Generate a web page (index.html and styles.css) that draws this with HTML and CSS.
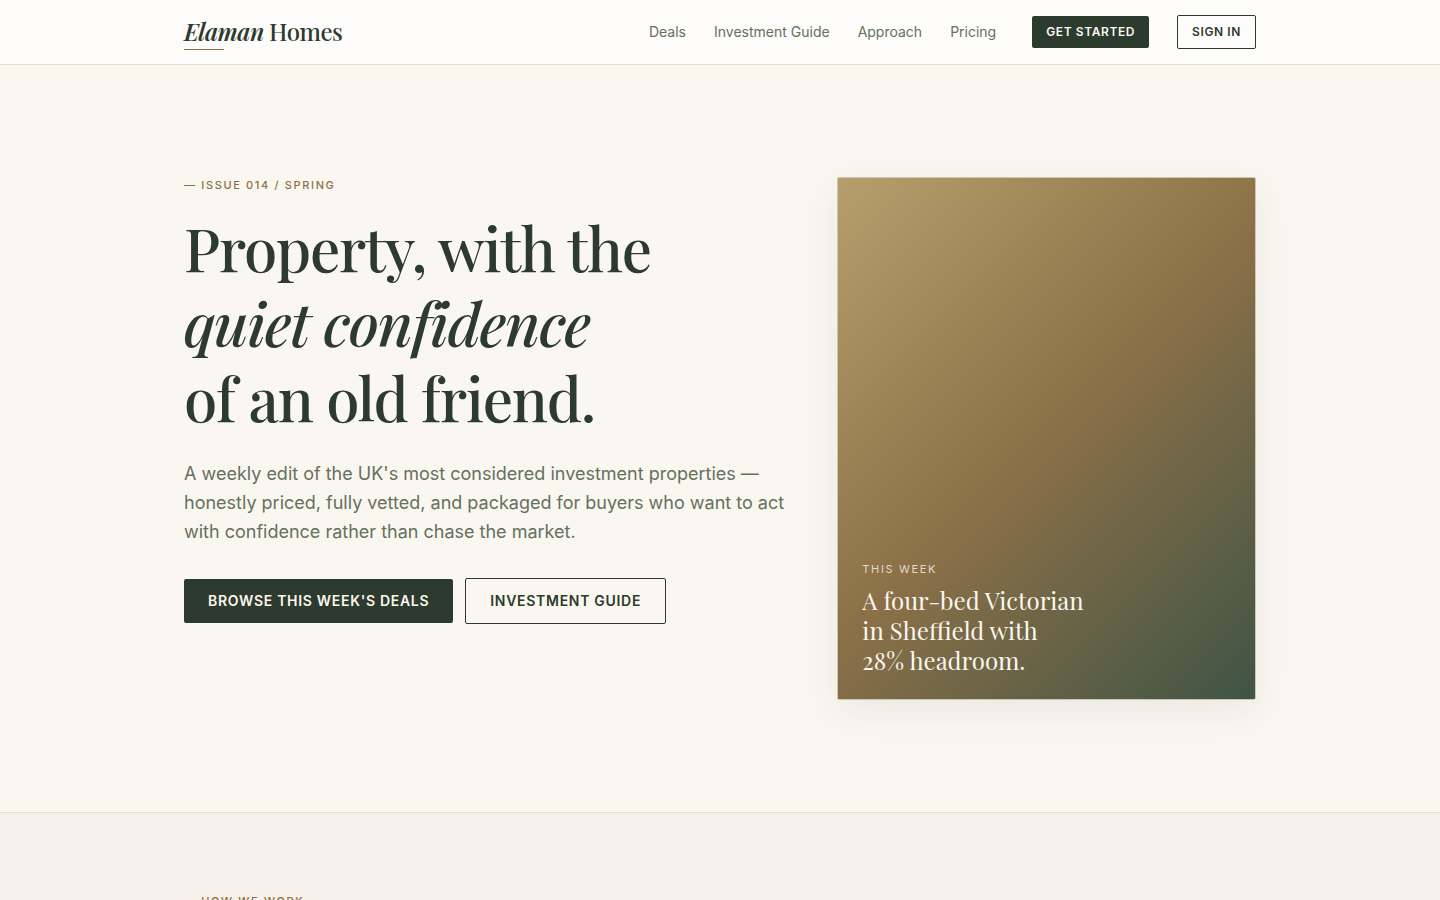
FILE: index.html
```html
<!DOCTYPE html>
<html lang="en-GB">
<head>
<meta charset="utf-8">
<meta name="viewport" content="width=device-width, initial-scale=1">
<title>Elaman Homes</title>
<link rel="stylesheet" href="styles.css">
</head>
<body>
<header class="site-header">
  <div class="container header-row">
    <a class="brand" href="#"><em>Elaman</em> Homes</a>
    <nav class="nav" aria-label="Main">
      <a class="nav-link" href="#deals">Deals</a>
      <a class="nav-link" href="#guide">Investment Guide</a>
      <a class="nav-link" href="#approach">Approach</a>
      <a class="nav-link" href="#pricing">Pricing</a>
      <a class="btn btn-small btn-solid nav-cta" href="#start">Get started</a>
      <a class="btn btn-small btn-outline" href="#signin">Sign in</a>
    </nav>
  </div>
</header>
<main>
  <section class="hero">
    <div class="container hero-grid">
      <div>
        <p class="eyebrow">— Issue 014 / Spring</p>
        <h1 class="headline">Property, with the<br><em>quiet confidence</em><br>of an old friend.</h1>
        <p class="lede">A weekly edit of the UK's most considered investment properties — honestly priced, fully vetted, and packaged for buyers who want to act with confidence rather than chase the market.</p>
        <div class="actions">
          <a class="btn btn-large btn-solid" href="#deals">Browse this week's deals</a>
          <a class="btn btn-large btn-outline" href="#guide">Investment guide</a>
        </div>
      </div>
      <article class="feature">
        <p class="feature-label">This week</p>
        <h2 class="feature-title">A four-bed Victorian<br>in Sheffield with<br>28% headroom.</h2>
      </article>
    </div>
  </section>
  <section class="approach" id="approach">
    <div class="container">
      <p class="eyebrow">— How we work</p>
    </div>
  </section>
</main>
</body>
</html>
```
FILE: styles.css
```css
:root {
  --ink: #2d3a2e;
  --muted: #66705f;
  --bronze: #8b7047;
  --cream: #faf7f0;
  --line: #e2ded6;
  --serif: "Playfair Display", "Liberation Serif", serif;
  --sans: Inter, "Liberation Sans", sans-serif;
}
* { box-sizing: border-box; }
html { overflow-x: hidden; scrollbar-width: none; }
body {
  margin: 0;
  background: var(--cream);
  color: var(--ink);
  font-family: var(--sans);
  font-size: 16px;
  line-height: 24px;
  -webkit-font-smoothing: antialiased;
}
p, h1, h2 { margin: 0; }
a { color: inherit; text-decoration: none; }
.container { max-width: 1120px; margin: 0 auto; padding: 0 24px; }

.site-header { background: #fdfcfa; border-bottom: 1px solid var(--line); }
.header-row { display: flex; align-items: center; justify-content: space-between; min-height: 64px; }
.brand { position: relative; padding-bottom: 2px; font-family: var(--serif); font-size: 24px; line-height: 30px; font-weight: 500; letter-spacing: -0.02em; }
.brand em { font-weight: 600; }
.brand::after { content: ""; position: absolute; left: 0; bottom: -2px; width: 40px; height: 1px; background: var(--bronze); }
.nav { display: flex; align-items: center; gap: 28px; }
.nav-link { color: var(--muted); font-size: 14px; line-height: 20px; }
.nav-cta { margin-left: 8px; }

.btn { display: inline-block; border-radius: 2px; font-weight: 600; text-transform: uppercase; letter-spacing: 0.05em; white-space: nowrap; }
.btn-small { padding: 7px 14px; font-size: 12px; line-height: 18px; }
.btn-large { padding: 11px 24px; font-size: 14px; line-height: 22px; }
.btn-solid { background: var(--ink); color: var(--cream); }
.btn-outline { border: 1px solid var(--ink); }

.hero { padding: 112px 0; border-bottom: 1px solid var(--line); }
.hero-grid { display: grid; grid-template-columns: 1.446fr 1fr; gap: 48px; align-items: start; }
.eyebrow { color: var(--bronze); font-size: 11px; line-height: 17px; font-weight: 500; letter-spacing: 0.15em; text-transform: uppercase; }
.headline { margin-top: 16px; font-family: var(--serif); font-size: 60px; line-height: 75px; font-weight: 500; letter-spacing: -0.02em; }
.lede { margin-top: 24px; color: var(--muted); font-size: 18px; line-height: 29px; }
.actions { display: flex; flex-wrap: wrap; align-items: center; gap: 12px; margin-top: 32px; }

.feature {
  display: flex;
  flex-direction: column;
  justify-content: flex-end;
  aspect-ratio: 4 / 5;
  padding: 24px;
  border: 1px solid #cdc6b4;
  border-radius: 2px;
  background: linear-gradient(135deg, #b89d6c 0%, #8b7047 50%, #3f5445 100%);
  box-shadow: 0 12px 40px rgba(45, 58, 46, 0.08);
  color: var(--cream);
}
.feature-label { color: #e0dac9; font-size: 11px; line-height: 16px; letter-spacing: 0.15em; text-transform: uppercase; }
.feature-title { margin-top: 8px; font-family: var(--serif); font-size: 24px; line-height: 30px; font-weight: 400; }

.approach { padding: 80px 0; background: #f6f1eb; }
```
